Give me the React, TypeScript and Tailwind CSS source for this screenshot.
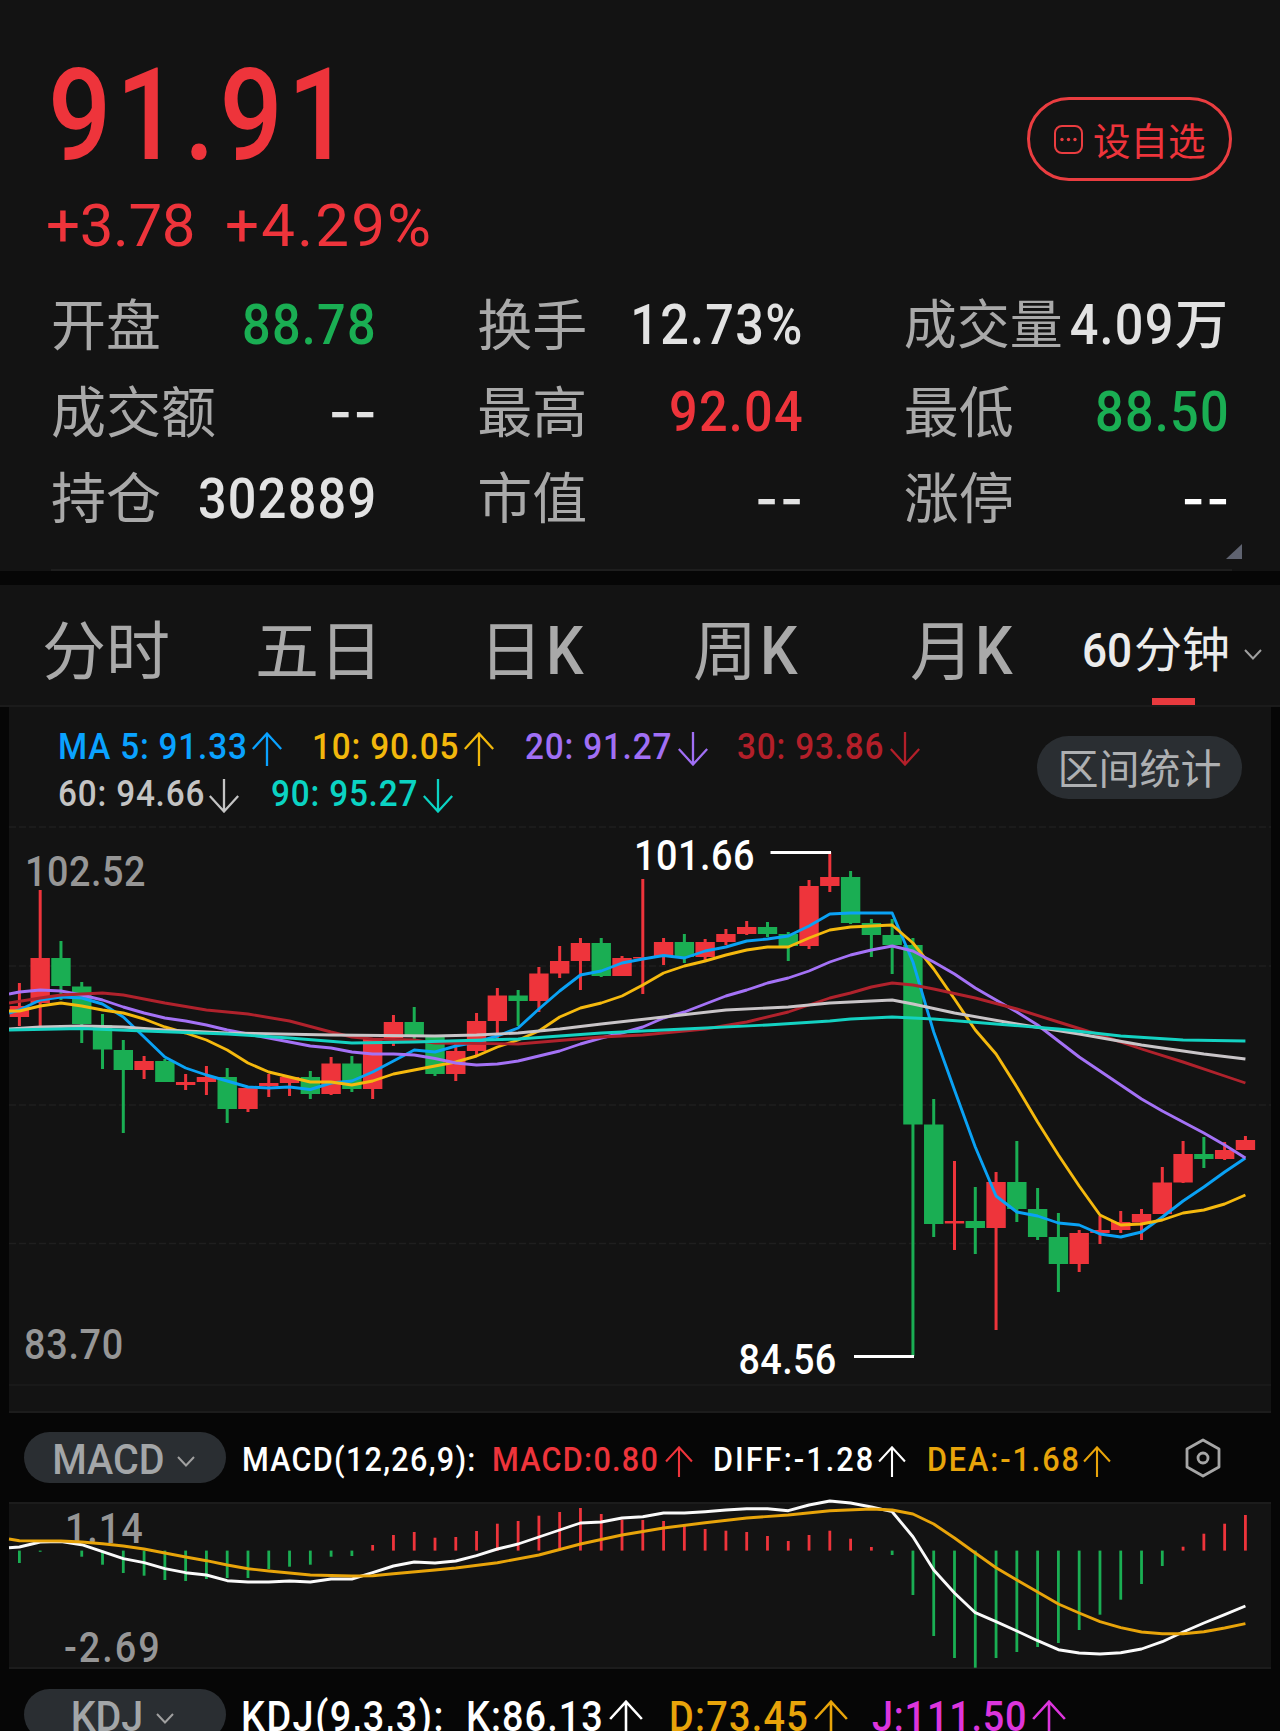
import clsx from 'clsx';

const RED = '#ee343b';
const GREEN = '#1aae53';

const FIRST_X = 19.4;
const STEP = 20.78;
const xAt = (i: number) => (i < 0 ? 9 : FIRST_X + STEP * i);

type Candle = ['r' | 'g', number, number, number, number];

// [color, high, body top, body bottom, low]
const candles: Candle[] = [
  ['r', 163, 186, 197, 206],
  ['r', 70, 138, 183, 206],
  ['g', 121, 138, 166, 180],
  ['g', 162, 166.5, 204, 223],
  ['g', 194, 205, 229.5, 249],
  ['g', 220, 230, 250, 313],
  ['r', 236, 241, 250, 259],
  ['g', 239, 241, 262, 262],
  ['r', 254, 262, 265, 270],
  ['r', 246, 257, 262, 275],
  ['g', 248, 257, 289, 303],
  ['r', 268, 268, 289, 292],
  ['r', 254, 263, 266, 277],
  ['r', 257, 257, 263, 276],
  ['g', 251, 257, 274, 279],
  ['r', 237, 243.5, 274, 275],
  ['g', 236, 243.5, 269, 272],
  ['r', 218, 218, 269, 279],
  ['r', 195, 202, 218, 226],
  ['g', 187, 202, 216, 219],
  ['g', 215, 216, 254, 256],
  ['r', 224, 231, 254, 261],
  ['r', 193, 201, 231, 235],
  ['r', 168, 175.5, 201, 220],
  ['g', 170, 175.5, 181, 206],
  ['r', 147, 153.5, 181, 192],
  ['r', 126, 141, 153.5, 158],
  ['r', 118, 123, 141, 170],
  ['g', 118, 123, 156, 157],
  ['r', 136, 138, 156, 156],
  ['r', 59, 137, 138.5, 174],
  ['r', 118, 122, 137, 145],
  ['g', 114, 122, 137, 143],
  ['r', 119, 122, 137, 140],
  ['r', 109, 114, 122, 125],
  ['r', 101, 107, 114, 115],
  ['g', 102, 107, 114, 117],
  ['g', 112, 114, 126, 141],
  ['r', 60, 66, 126, 129],
  ['r', 32, 57, 66, 72],
  ['g', 51, 57, 103, 104],
  ['g', 99, 103, 115, 137],
  ['g', 99, 115, 125, 154],
  ['g', 118, 125, 304.5, 536],
  ['g', 279, 304.5, 404, 417],
  ['r', 341, 401, 403.5, 430],
  ['g', 367, 401, 408, 434],
  ['r', 352, 362, 408, 510],
  ['g', 321, 362, 389, 402],
  ['g', 368, 389, 417, 420],
  ['g', 393, 417, 444, 472],
  ['r', 410, 413, 444, 452],
  ['r', 396, 410, 413, 424],
  ['r', 391, 402, 410, 413],
  ['r', 389, 394, 402.5, 420],
  ['r', 347, 362.5, 394, 394],
  ['r', 321, 334, 362.5, 363],
  ['g', 317, 334, 339, 348],
  ['r', 322, 330, 339, 340],
  ['r', 316, 320, 330, 330],
];

const ma5 = [
  193, 190, 180, 177, 178, 184, 197, 217, 237, 248, 255, 261, 267, 268, 267, 269.5, 263, 261, 252, 241, 230,
  232, 226, 222, 216, 208, 189, 171, 155, 151, 143, 139, 135.5, 138, 131, 127, 121, 119, 116, 106, 94,
  93, 93, 93, 142, 212, 270, 327, 376, 392, 396, 403, 405, 414, 417, 412, 397, 381, 367, 352, 338,
];
const ma10 = [
  191, 191, 186, 183, 186, 190, 193, 199, 207, 213, 220, 230, 243, 252, 257, 262, 262, 265, 261, 254, 250,
  246, 242, 236, 227, 220, 211, 197, 188, 183, 176, 165, 153, 146, 141, 135, 130, 127, 127, 118, 110,
  107, 106, 105, 123, 149, 179, 210, 234, 267, 302, 335, 366, 395, 405, 404, 400, 393, 390, 384, 375,
];
const ma20 = [
  174, 172, 170, 171, 175, 180, 187, 193, 198, 201, 205, 210, 214, 218, 222, 226, 228, 232, 234, 234, 235,
  238.5, 243, 245, 244, 241, 236, 231, 224, 218, 213, 207, 198, 192, 184, 176, 170, 163, 158, 151, 142,
  135, 130, 126, 131, 142, 154, 168, 180, 192, 205, 221, 237, 251, 265, 279, 291, 302, 313, 325, 338,
];

type Point = [number, number];

// series sampled at every bar, starting from the left edge
const dense = (ys: number[]): Point[] => ys.map((y, i) => [i - 1, y]);

const ma30: Point[] = [
  [-1, 183], [1, 178], [2, 175], [3, 174], [4, 173], [5, 175], [7, 183], [9, 190], [11, 194], [13, 201],
  [15, 212], [16, 217], [17, 219], [19, 220], [20, 223], [24, 224], [28, 217], [30, 215], [33, 209],
  [35, 202], [37, 192], [39, 178], [40, 173], [41, 167], [42, 163], [43, 165], [44, 169], [46, 178],
  [48, 189], [50, 202], [52, 215], [54, 229], [56, 242], [58, 256], [59, 263],
];
const ma60: Point[] = [
  [-1, 209], [1, 207], [3, 206], [5, 207], [7, 210], [10, 213], [15, 215], [20, 216], [22, 215], [24, 213],
  [26, 209], [28, 204], [31, 197], [34, 190], [37, 187], [39, 183], [40, 182], [41, 181], [42, 180],
  [43, 184], [45, 193], [48, 204], [51, 214], [54, 225], [57, 234], [59, 239],
];
const ma90: Point[] = [
  [-1, 210], [3, 208.5], [6, 211], [10, 214], [13, 218], [16, 223], [19, 222], [24, 219], [28, 213],
  [32, 209], [36, 205], [39, 201], [40, 199], [42, 197], [44, 199], [47, 204], [50, 209], [53, 216],
  [56, 220], [59, 221],
];

const MACD_ZERO = 48.6;
const macdBars = [
  61, 49.8, 48.6, 54.7, 62.7, 71, 73.7, 78, 79, 77, 76, 76, 67, 64.7, 62.7, 54.7, 54, 43, 33, 30,
  35.7, 35, 29, 21.7, 19, 13.7, 10, 6, 12, 17.7, 18, 19, 24, 27, 28.7, 30, 34, 39, 33, 28.7,
  36.7, 45, 53, 93, 134, 156, 165.7, 156, 150, 145, 141, 128, 112.7, 97.7, 82, 64, 44.7, 31.7, 21.7, 13,
];
const diff = [
  45.7, 45, 40, 39.5, 42.7, 49.7, 56.7, 60.7, 66.7, 70.7, 73, 78.7, 80, 80, 79, 80, 77, 77, 70.7, 64, 60,
  61, 59, 53.7, 47, 42, 35, 28, 21, 20, 16, 14.7, 11, 11, 9.7, 8, 6.7, 6.7, 8.7, 3, -1,
  1, 5, 9.7, 34.7, 68, 91, 110.7, 119.7, 129, 138.7, 147.7, 151, 152, 150.7, 147, 139.7, 130, 121, 112.7, 104,
];
const dea: Point[] = [
  [-1, 37], [0, 38.7], [2, 39], [3, 40], [4, 41.7], [5, 44], [6, 47], [7, 51], [8, 55], [9, 58.7],
  [10, 63], [11, 66.7], [12, 69], [13, 71], [14, 73], [16, 74], [17, 73.7], [18, 71.7], [20, 68], [21, 66],
  [23, 60.7], [25, 53], [27, 42], [29, 33], [31, 26], [33, 20.7], [35, 16], [37, 13], [39, 8.7],
  [41, 7], [42, 8], [43, 12], [44, 22], [45, 36], [46, 51], [47, 65.7], [48, 78], [49, 90], [50, 102],
  [51, 111], [52, 119.7], [53, 125.7], [54, 130], [55, 131.7], [56, 131.7], [57, 129.7], [58, 126], [59, 121.7],
];

function Line({ points, color }: { points: Point[]; color: string }) {
  return (
    <polyline
      points={points.map(([i, y]) => `${xAt(i)},${y}`).join(' ')}
      fill="none"
      stroke={color}
      strokeWidth="2.9"
      strokeLinejoin="round"
    />
  );
}

function Arrow({ down, className }: { down?: boolean; className?: string }) {
  return (
    <svg
      viewBox="0 0 30 34"
      className={clsx('shrink-0', down && 'rotate-180', className)}
      fill="none"
      stroke="currentColor"
      strokeWidth="2.3"
    >
      <path d="M15 34V1.5M.8 17 15 1.5 29.2 17" />
    </svg>
  );
}

function Chevron({ className }: { className?: string }) {
  return (
    <svg viewBox="0 0 18 11" className={clsx('h-[11px] w-[18px] shrink-0', className)} fill="none" stroke="#a0a0a0" strokeWidth="2">
      <path d="M1 1l8 8.5L17 1" />
    </svg>
  );
}

const stats = [
  { label: '开盘', value: '88.78', color: 'text-[#1aae53]' },
  { label: '换手', value: '12.73%', color: 'text-[#e2e2e2]' },
  { label: '成交量', value: '4.09', unit: '万', color: 'text-[#e2e2e2]' },
  { label: '成交额', value: '--', color: 'text-[#e2e2e2]' },
  { label: '最高', value: '92.04', color: 'text-[#ee343b]' },
  { label: '最低', value: '88.50', color: 'text-[#1aae53]' },
  { label: '持仓', value: '302889', color: 'text-[#e2e2e2]' },
  { label: '市值', value: '--', color: 'text-[#e2e2e2]' },
  { label: '涨停', value: '--', color: 'text-white' },
];

function Quote() {
  return (
    <section className="relative h-[571px] bg-[#131313] pt-[55px]">
      <div className="flex justify-between pl-[46px] pr-[48px] text-[#ee343b]">
        <div>
          <div className="ml-[2px] h-[120px] origin-left scale-x-[0.87] text-[128px] leading-[120px] font-medium tracking-[5.4px]">
            91.91
          </div>
          <div className="mt-[21px] flex gap-[30px] text-[60px] leading-[60px]">
            <span className="tracking-[-0.4px]">+3.78</span>
            <span className="tracking-[2.2px]">+4.29%</span>
          </div>
        </div>
        <button className="mt-[42px] flex h-[84px] w-[205px] items-center rounded-[42px] border-[3px] border-[#ea3d40] pl-[24px]">
          <svg viewBox="0 0 29 29" className="mt-[1px] h-[29px] w-[29px]" fill="none" stroke="#ea3d40" strokeWidth="2">
            <rect x="1" y="1" width="27" height="27" rx="7" />
            <g fill="#ea3d40" stroke="none">
              <circle cx="8" cy="14.5" r="1.7" />
              <circle cx="14.5" cy="14.5" r="1.7" />
              <circle cx="21" cy="14.5" r="1.7" />
            </g>
          </svg>
          <span className="ml-[10px] mt-[5px] text-[37.5px] leading-[40px] whitespace-nowrap">设自选</span>
        </button>
      </div>
      <div className="mt-[26px] grid grid-cols-3 gap-x-[103px] pl-[51px] pr-[53px]">
        {stats.map((s) => (
          <div key={s.label} className="flex h-[86.7px] items-center justify-between whitespace-nowrap">
            <span className={clsx('pt-[2px] text-[#a9a9a9]', s.unit ? '-mr-[20px] text-[53px]' : 'text-[55px]')}>{s.label}</span>
            {s.value === '--' ? (
              <span className={clsx("-mr-[4px] pt-[1px] font-['Inter'] text-[50px] font-semibold tracking-[1.5px]", s.color)}>
                {s.value}
              </span>
            ) : (
              <span className={clsx('flex items-center text-[56px] font-medium', s.color, s.unit ? '-mr-[1px]' : '-mr-[3px]')}>
                <span className="origin-right scale-x-90 tracking-[1.4px]">{s.value}</span>
                {s.unit && <span className="pt-[2px] text-[53px]">{s.unit}</span>}
              </span>
            )}
          </div>
        ))}
      </div>
      <svg viewBox="0 0 16 15" className="absolute top-[544px] left-[1226px] h-[15px] w-[16px]">
        <path d="M16 0v15H0z" fill="#5f6370" />
      </svg>
      <div className="absolute bottom-0 left-[51px] h-[2px] w-[1181px] bg-[#1e1e1e]" />
    </section>
  );
}

function Tabs() {
  return (
    <nav className="mt-[14px] flex h-[122px] items-center border-b-2 border-[#1b1b1b] bg-[#131313] pt-[15px] pl-[42px] text-[64px] leading-[70px] whitespace-nowrap text-[#a9a9a9]">
      <span className="w-[213px]">分时</span>
      <span className="w-[224px]">五日</span>
      <span className="w-[214px]">
        日<span className="ml-[3px] inline-block origin-left scale-x-90 text-[66px] font-medium">K</span>
      </span>
      <span className="w-[217px]">
        周<span className="ml-[3px] inline-block origin-left scale-x-90 text-[66px] font-medium">K</span>
      </span>
      <span className="w-[171px]">
        月<span className="ml-[1px] inline-block origin-left scale-x-90 text-[66px] font-medium">K</span>
      </span>
      <span className="relative flex items-center text-[48px] text-[#ececec]">
        <span className="mb-[3px]">
          <span className="ml-[1px] inline-block w-[52px] origin-left scale-x-[0.92] font-medium">60</span>分钟
        </span>
        <Chevron className="mt-[3px] ml-[14px]" />
        <span className="absolute top-[82px] left-[71px] h-[7px] w-[43px] bg-[#e83a3e]" />
      </span>
    </nav>
  );
}

const legend = [
  [
    { text: 'MA 5: 91.33', color: 'text-[#0aa2ff]', cell: 'w-[254px]', textWidth: 'w-[194px]' },
    { text: '10: 90.05', color: 'text-[#f2b80c]', cell: 'w-[213px]', textWidth: 'w-[152px]' },
    { text: '20: 91.27', color: 'text-[#a06ff5]', cell: 'w-[212px]', textWidth: 'w-[153px]', down: true },
    { text: '30: 93.86', color: 'text-[#b31f29]', cell: 'w-[212px]', textWidth: 'w-[153px]', down: true },
  ],
  [
    { text: '60: 94.66', color: 'text-[#c4c4c4]', cell: 'w-[213px]', textWidth: 'w-[151px]', down: true },
    { text: '90: 95.27', color: 'text-[#0bd3c3]', cell: 'w-[213px]', textWidth: 'w-[152px]', down: true },
  ],
];

function KLine() {
  return (
    <section className="mx-[9px] h-[706px] border-b-2 border-[#1c1c1c] bg-[#131313]">
      <div className="flex h-[113px] justify-between pt-[16px] pr-[29px] pl-[49px]">
        <div>
          {legend.map((row, i) => (
            <div key={i} className="flex h-[47px] text-[37px] leading-[47px] font-medium whitespace-nowrap">
              {row.map((m) => (
                <div key={m.text} className={clsx('flex items-center', m.color, m.cell)}>
                  <span className={clsx('origin-left scale-x-90 tracking-[0.9px]', m.textWidth)}>{m.text}</span>
                  <Arrow down={m.down} className="mt-[5px] h-[34px] w-[30px]" />
                </div>
              ))}
            </div>
          ))}
        </div>
        <button className="mt-[13px] h-[63px] w-[205px] rounded-full bg-[#2a2e32] text-[41px] leading-[68px] text-[#aeb0b2]">
          区间统计
        </button>
      </div>
      <svg viewBox="9 0 1262 591" className="block h-[591px] w-[1262px]">
        {[7, 146, 285, 423.5].map((y) => (
          <path key={y} d={`M9 ${y}H1271`} stroke="#1f1f1f" strokeWidth="1.5" strokeDasharray="7 3" />
        ))}
        <path d="M9 565H1271" stroke="#1c1c1c" strokeWidth="1.5" />
        {candles.map(([c, high, top, bottom, low], i) => {
          const x = xAt(i);
          const left = Math.max(9, x - 9.7);
          return (
            <g key={i} fill={c === 'r' ? RED : GREEN}>
              <rect x={x - 1.5} y={high} width="3" height={low - high} />
              <rect x={left} y={top} width={x + 9.7 - left} height={bottom - top} />
            </g>
          );
        })}
        <Line points={dense(ma5)} color="#0aa2f5" />
        <Line points={dense(ma10)} color="#f5b90e" />
        <Line points={dense(ma20)} color="#a472f6" />
        <Line points={ma30} color="#b0222c" />
        <Line points={ma60} color="#c9c5c8" />
        <Line points={ma90} color="#14d2c2" />
        <path d="M770.5 32.5H831M854 536.5H914" stroke="#fff" strokeWidth="2.8" />
        <g fontSize="42" fontWeight="500">
          <text transform="translate(25 66) scale(0.9 1)" fill="#969696" letterSpacing="0.6">102.52</text>
          <text transform="translate(24 538.5) scale(0.9 1)" fill="#969696" letterSpacing="0.8">83.70</text>
          <text transform="translate(634 50) scale(0.9 1)" fill="#fff" letterSpacing="0.6">101.66</text>
          <text transform="translate(738.5 554) scale(0.9 1)" fill="#fff" letterSpacing="0.4">84.56</text>
        </g>
      </svg>
    </section>
  );
}

function Pill({ children, className }: { children: string; className?: string }) {
  return (
    <button
      className={clsx(
        'flex h-[51px] w-[202px] items-center justify-center gap-[12px] rounded-full bg-[#2a2e32] text-[42px] leading-[51px] text-[#a3a6a8]',
        className,
      )}
    >
      <span className="mt-[4px] -ml-[2px] origin-right scale-x-[0.94]">{children}</span>
      <Chevron className="mt-[8px] mr-[8px]" />
    </button>
  );
}

function Macd() {
  return (
    <>
      <div className="flex h-[89px] items-center pl-[24px] text-[34px] font-medium whitespace-nowrap text-white">
        <Pill>MACD</Pill>
        <span className="mt-[4px] ml-[16px] w-[250px] origin-left scale-x-90 tracking-[1.4px]">MACD(12,26,9):</span>
        <span className="mt-[4px] w-[173px] origin-left scale-x-90 tracking-[1.4px] text-[#ee343b]">MACD:0.80</span>
        <Arrow className="mt-[7px] h-[31px] w-[28px] text-[#ee343b]" />
        <span className="mt-[4px] ml-[20px] w-[165px] origin-left scale-x-90 tracking-[2.3px]">DIFF:-1.28</span>
        <Arrow className="mt-[7px] h-[31px] w-[28px]" />
        <span className="mt-[4px] ml-[21px] w-[156px] origin-left scale-x-90 tracking-[2.1px] text-[#e8a40a]">DEA:-1.68</span>
        <Arrow className="mt-[7px] h-[31px] w-[28px] text-[#e8a40a]" />
        <svg viewBox="0 0 36 40" className="ml-[74px] h-[40px] w-[36px]" fill="none" stroke="#a6a6a6" strokeWidth="2.8">
          <path d="M18 2 34 11V29L18 38 2 29V11Z" strokeLinejoin="round" />
          <circle cx="18" cy="20" r="5" />
        </svg>
      </div>
      <section className="mx-[9px] h-[167px] border-y-2 border-[#1c1c1c] bg-[#131313]">
        <svg viewBox="9 2 1262 163" className="block h-[163px] w-[1262px] overflow-visible">
          <g fontSize="42" fill="#969696" fontWeight="500">
            <text transform="translate(65 40.5) scale(0.9 1)" letterSpacing="1">1.14</text>
            <text transform="translate(64 159.5) scale(0.9 1)" letterSpacing="2.2">-2.69</text>
          </g>
          {macdBars.map((y, i) => (
            <rect
              key={i}
              x={xAt(i) - 1.4}
              y={Math.min(y, MACD_ZERO)}
              width="2.8"
              height={Math.abs(y - MACD_ZERO)}
              fill={y > MACD_ZERO ? GREEN : RED}
            />
          ))}
          <Line points={dense(diff)} color="#fafafa" />
          <Line points={dea} color="#e8a40a" />
        </svg>
      </section>
    </>
  );
}

function Kdj() {
  return (
    <div className="flex h-[94px] items-center pl-[24px] text-[42px] font-medium whitespace-nowrap text-white">
      <Pill className="mb-[3px]">KDJ</Pill>
      <span className="ml-[15px] w-[224px] origin-left scale-x-90 tracking-[1.7px]">KDJ(9,3,3):</span>
      <span className="ml-[1px] w-[143px] origin-left scale-x-90 tracking-[1.2px]">K:86.13</span>
      <Arrow className="mt-[6px] h-[38px] w-[34px]" />
      <span className="ml-[26px] w-[145px] origin-left scale-x-90 tracking-[1.4px] text-[#e8a40a]">D:73.45</span>
      <Arrow className="mt-[6px] h-[38px] w-[34px] text-[#e8a40a]" />
      <span className="ml-[24px] w-[160px] origin-left scale-x-90 tracking-[0.9px] text-[#dc35dc]">J:111.50</span>
      <Arrow className="mt-[6px] h-[38px] w-[34px] text-[#dc35dc]" />
    </div>
  );
}

export default function App() {
  return (
    <div className="h-[1731px] w-[1280px] overflow-hidden bg-[#060606] font-['Roboto','Noto_Sans_CJK_SC',sans-serif]">
      <Quote />
      <Tabs />
      <KLine />
      <Macd />
      <Kdj />
    </div>
  );
}
